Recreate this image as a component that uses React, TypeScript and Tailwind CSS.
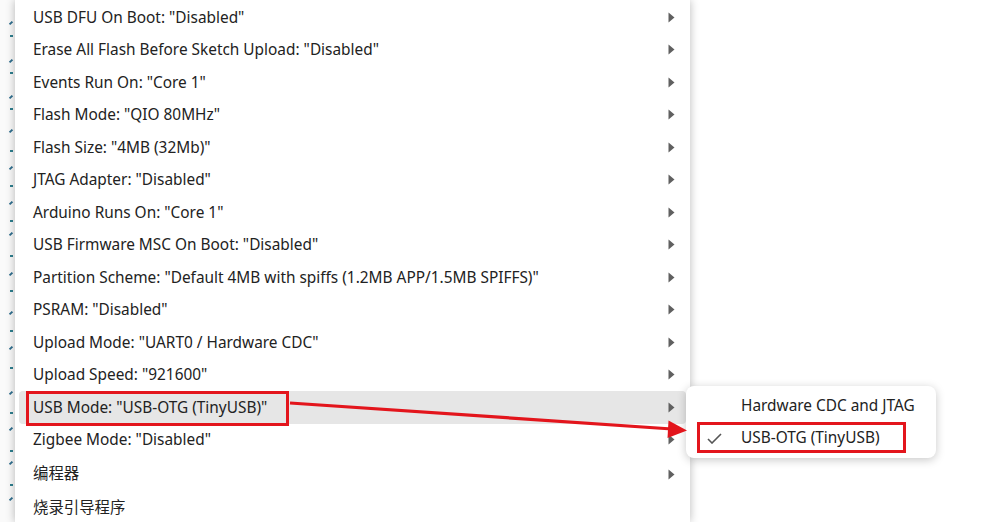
import React from "react";

const items: string[] = [
  'USB DFU On Boot: "Disabled"',
  'Erase All Flash Before Sketch Upload: "Disabled"',
  'Events Run On: "Core 1"',
  'Flash Mode: "QIO 80MHz"',
  'Flash Size: "4MB (32Mb)"',
  'JTAG Adapter: "Disabled"',
  'Arduino Runs On: "Core 1"',
  'USB Firmware MSC On Boot: "Disabled"',
  'Partition Scheme: "Default 4MB with spiffs (1.2MB APP/1.5MB SPIFFS)"',
  'PSRAM: "Disabled"',
  'Upload Mode: "UART0 / Hardware CDC"',
  'Upload Speed: "921600"',
  'USB Mode: "USB-OTG (TinyUSB)"',
  'Zigbee Mode: "Disabled"',
  "编程器",
  "烧录引导程序",
];

const hasArrow = (i: number) => i <= 14;

function Tri() {
  return (
    <svg width="7" height="11" viewBox="0 0 7 11" className="shrink-0">
      <path d="M0.5 0.5 L6.5 5.5 L0.5 10.5 Z" fill="#606060" />
    </svg>
  );
}

export default function App() {
  const marks = [22, 35, 60, 72, 96, 108, 130, 150, 167, 185, 202, 220, 233, 255, 273, 290, 312, 330, 347, 367, 392, 412, 428, 450, 462, 484, 498];
  return (
    <div
      className="relative w-[982px] h-[522px] overflow-hidden bg-white flex"
      style={{ fontFamily: '"Noto Sans", "Noto Sans CJK SC", sans-serif' }}
    >
      {/* left editor strip */}
      <div className="w-[15px] h-full bg-[#fafafa] flex flex-col shrink-0">
        {marks.map((m, i) => (
          <div
            key={i}
            className={
              i % 2 === 0
                ? "ml-[9px] w-[4px] h-[2px] bg-[#2f6f8f] -rotate-45"
                : "ml-[10px] w-[3px] h-[2px] bg-[#2f7f8f]"
            }
            style={{ marginTop: i === 0 ? m : m - marks[i - 1] - 2 }}
          />
        ))}
      </div>

      {/* main menu */}
      <div className="w-[675px] h-full bg-white shrink-0 shadow-[0_0_9px_rgba(0,0,0,0.28)] pt-[1px] z-10">
        {items.map((t, i) => (
          <div
            key={i}
            className={
              (i >= 14 ? "h-[34px] pt-[2px] " : "h-[32.5px] ") +
              "mx-[4px] pl-[14px] pr-[11px] flex items-center justify-between rounded-[4px] " +
              (i === 12 ? "bg-[#e6e6e6]" : "")
            }
          >
            <span className="text-[15.4px] text-[#222222] leading-none whitespace-nowrap">{t}</span>
            {hasArrow(i) && <Tri />}
          </div>
        ))}
      </div>

      {/* submenu */}
      <div className="absolute left-[686px] top-[386px] w-[250px] h-[72px] bg-white rounded-[8px] shadow-[0_2px_10px_rgba(0,0,0,0.22)] z-20 flex flex-col pt-[4px]">
        <div className="h-[32px] flex items-center pl-[55px]">
          <span className="text-[15.4px] text-[#222222] leading-none">Hardware CDC and JTAG</span>
        </div>
        <div className="h-[32px] flex items-center">
          <div className="w-[55px] pl-[21px] flex items-center">
            <svg width="15" height="11" viewBox="0 0 15 11">
              <path d="M1 6 L5 10 L14 1" fill="none" stroke="#555" strokeWidth="1.6" />
            </svg>
          </div>
          <span className="text-[15.4px] text-[#222222] leading-none">USB-OTG (TinyUSB)</span>
        </div>
      </div>

      {/* annotations */}
      <div className="absolute left-[26px] top-[391px] w-[263px] h-[35px] border-[3px] border-[#e3151c] z-30" />
      <div className="absolute left-[697px] top-[422px] w-[209px] h-[31px] border-[3px] border-[#e3151c] z-30" />
      <svg className="absolute left-0 top-0 z-30" width="982" height="522" viewBox="0 0 982 522">
        <line x1="290" y1="403" x2="672" y2="429" stroke="#e3151c" strokeWidth="3.2" />
        <polygon points="687,430.5 668.5,420.5 667.5,438" fill="#e3151c" />
      </svg>
    </div>
  );
}
